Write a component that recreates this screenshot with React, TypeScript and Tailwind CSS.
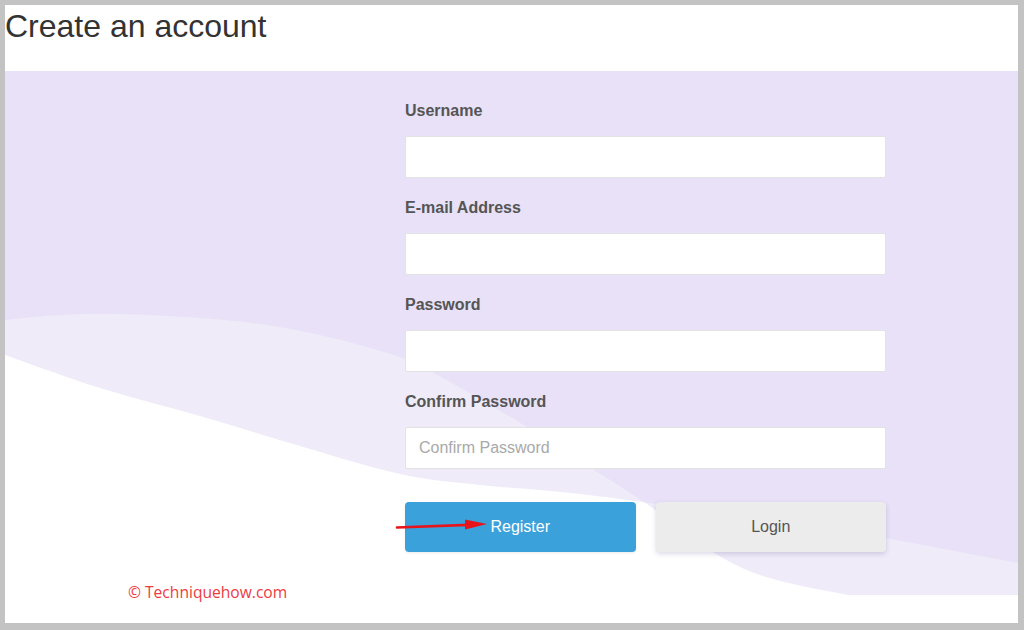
import React from 'react';

type Pt = [number, number];

// catmull-rom -> cubic bezier, keeps the wave edges smooth
const smooth = (pts: Pt[]) => {
  let d = `M${pts[0][0]},${pts[0][1]}`;
  for (let i = 0; i < pts.length - 1; i++) {
    const p0 = pts[i - 1] || pts[i];
    const p1 = pts[i];
    const p2 = pts[i + 1];
    const p3 = pts[i + 2] || p2;
    const c1x = p1[0] + (p2[0] - p0[0]) / 6;
    const c1y = p1[1] + (p2[1] - p0[1]) / 6;
    const c2x = p2[0] - (p3[0] - p1[0]) / 6;
    const c2y = p2[1] - (p3[1] - p1[1]) / 6;
    d += ` C${c1x.toFixed(1)},${c1y.toFixed(1)} ${c2x.toFixed(1)},${c2y.toFixed(1)} ${p2[0]},${p2[1]}`;
  }
  return d;
};

const UPPER_WAVE: Pt[] = [
  [5, 320], [60, 315], [120, 314], [200, 318], [267, 325], [333, 338], [400, 357],
  [430, 371], [480, 399], [530, 429], [583, 463], [650, 506], [703, 546],
  [760, 575], [843, 594], [900, 602],
];

const LOWER_WAVE: Pt[] = [
  [5, 355], [100, 388], [200, 416], [300, 446], [400, 474], [480, 485],
  [580, 494], [700, 510], [800, 524], [880, 537], [1018, 563],
];

const upperPath = smooth(UPPER_WAVE) + ' L900,620 L5,620 Z';
const lowerPath = smooth(LOWER_WAVE) + ' L1018,620 L5,620 Z';

const Waves: React.FC = () => (
  <svg
    className="absolute inset-0 w-full h-full"
    viewBox="5 71 1013 524"
    preserveAspectRatio="none"
  >
    <defs>
      <clipPath id="upper-clip">
        <path d={upperPath} />
      </clipPath>
    </defs>
    <path d={upperPath} fill="#efebf9" />
    <path d={lowerPath} fill="#efebf9" />
    <path d={lowerPath} fill="#ffffff" clipPath="url(#upper-clip)" />
  </svg>
);

const Field: React.FC<{ label: string; placeholder?: string; type?: string }> = ({ label, placeholder, type = 'text' }) => (
  <div className="flex flex-col">
    <label className="h-[18px] leading-[18px] text-[16px] font-bold text-[#555]">{label}</label>
    <input
      type={type}
      placeholder={placeholder}
      className="mt-[16px] h-[42px] w-full rounded-[2px] border border-[#e3e3e3] bg-white px-[13px] text-[16px] text-[#555] placeholder:text-[#a9a9a9] outline-none"
    />
  </div>
);

const App: React.FC = () => {
  return (
    <div
      className="w-[1024px] h-[630px] bg-[#c3c3c3] pt-[5px] pl-[5px] pr-[6px] pb-[7px]"
      style={{ fontFamily: '"Liberation Sans", Arial, sans-serif' }}
    >
      <div className="relative flex h-full w-full flex-col bg-white">
        {/* Header */}
        <div className="h-[66px] shrink-0 pt-[5px]">
          <h1 className="text-[32px] leading-[32px] font-normal text-[#333]">Create an account</h1>
        </div>

        {/* Form area */}
        <div className="relative h-[524px] shrink-0 bg-[#e8e1f7]">
          <Waves />
          <div className="relative ml-[400px] w-[481px] pt-[31px]">
            <div className="flex flex-col gap-[21px]">
              <Field label="Username" />
              <Field label="E-mail Address" type="email" />
              <Field label="Password" type="password" />
              <Field label="Confirm Password" placeholder="Confirm Password" type="password" />
            </div>
            <div className="mt-[33px] grid grid-cols-2 gap-[20px]">
              <button className="h-[50px] rounded-[4px] bg-[#3ba1db] text-[16px] text-white shadow-[0_1px_3px_rgba(0,0,0,0.08)]">
                Register
              </button>
              <button className="h-[50px] rounded-[4px] bg-[#ececec] text-[16px] text-[#555] shadow-[0_2px_5px_rgba(60,40,120,0.18)]">
                Login
              </button>
            </div>
          </div>
        </div>

        <div className="flex-1" />

        {/* red annotation arrow */}
        <svg className="absolute left-[390px] top-[507px] w-[100px] h-[20px]" viewBox="0 0 100 20">
          <line x1="2" y1="15.5" x2="80" y2="12.6" stroke="#e8141c" strokeWidth="2.6" strokeLinecap="round" />
          <polygon points="70,7.5 92,12 70,17.5" fill="#e8141c" />
        </svg>

        {/* watermark */}
        <div
          className="absolute left-[123px] top-[577px] text-[15.6px] leading-[20px] text-[#ee3a42]"
          style={{ fontFamily: '"Open Sans", "Noto Sans", sans-serif' }}
        >
          © Techniquehow.com
        </div>
      </div>
    </div>
  );
};

export default App;
